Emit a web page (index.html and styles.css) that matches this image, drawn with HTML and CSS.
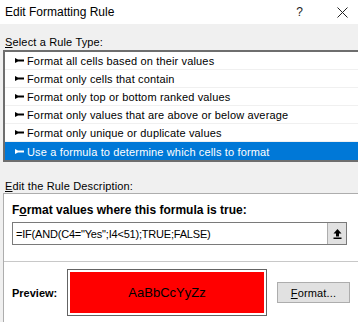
FILE: index.html
```html
<!DOCTYPE html>
<html lang="en">
<head>
  <meta charset="UTF-8" />
  <title>Edit Formatting Rule</title>
  <link rel="stylesheet" href="styles.css">
</head>
<body>
  <div class="titlebar">
    <span class="title">Edit Formatting Rule</span>
    <span class="help">?</span>
    <svg class="close" width="11" height="11" viewBox="0 0 11 11"><path d="M0.5 0.5 L10.5 10.5 M10.5 0.5 L0.5 10.5" stroke="#222" stroke-width="1"/></svg>
  </div>

  <div class="dialog">
    <div class="label"><u>S</u>elect a Rule Type:</div>
    <ul class="rule-list">
      <li><svg class="pin" viewBox="0 0 9 6"><path d="M0 0 L3 1.5 H9 V3.5 H3 L0 5 Z"/></svg>Format all cells based on their values</li>
      <li><svg class="pin" viewBox="0 0 9 6"><path d="M0 0 L3 1.5 H9 V3.5 H3 L0 5 Z"/></svg>Format only cells that contain</li>
      <li><svg class="pin" viewBox="0 0 9 6"><path d="M0 0 L3 1.5 H9 V3.5 H3 L0 5 Z"/></svg>Format only top or bottom ranked values</li>
      <li><svg class="pin" viewBox="0 0 9 6"><path d="M0 0 L3 1.5 H9 V3.5 H3 L0 5 Z"/></svg>Format only values that are above or below average</li>
      <li><svg class="pin" viewBox="0 0 9 6"><path d="M0 0 L3 1.5 H9 V3.5 H3 L0 5 Z"/></svg>Format only unique or duplicate values</li>
      <li class="selected"><svg class="pin" viewBox="0 0 9 6"><path d="M0 0 L3 1.5 H9 V3.5 H3 L0 5 Z"/></svg>Use a formula to determine which cells to format</li>
    </ul>

    <div class="label desc-label"><u>E</u>dit the Rule Description:</div>
    <div class="desc-box">
      <div class="formula-title">F<u>o</u>rmat values where this formula is true:</div>
      <div class="formula-input">
        <span class="formula-text">=IF(AND(C4="Yes";I4&lt;51);TRUE;FALSE)</span>
        <span class="collapse-btn">
          <svg width="9" height="10" viewBox="0 0 9 10"><path d="M4.5 0 L8.5 4.5 H6 V7.5 H3 V4.5 H0.5 Z M0.5 8.5 H8.5 V10 H0.5 Z" fill="#000"/></svg>
        </span>
      </div>
      <div class="separator"></div>
      <div class="preview-row">
        <span class="preview-label">Preview:</span>
        <div class="preview-frame"><div class="preview-fill">AaBbCcYyZz</div></div>
        <button class="format-btn"><u>F</u>ormat...</button>
      </div>
    </div>
  </div>
</body>
</html>
```

FILE: styles.css
```css
body {
  margin: 0;
  width: 358px;
  height: 322px;
  overflow: hidden;
  background: #f0f0f0;
  font-family: 'Liberation Sans', Arial, sans-serif;
  font-size: 11px;
  letter-spacing: 0.15px;
  color: #000;
}
.titlebar {
  height: 24px;
  background: white;
  display: flex;
  align-items: center;
  padding-left: 5px;
  letter-spacing: 0;
}
.title {
  font-size: 12px;
  flex: 1;
}
.help {
  font-size: 12px;
  margin-right: 34px;
  color: #222;
}
.close {
  margin-right: 10px;
}
.dialog {
  padding-left: 3px;
  width: 355px;
  overflow: hidden;
}
.label {
  height: 26px;
  line-height: 14px;
  padding-left: 2px;
  padding-top: 11px;
  box-sizing: border-box;
}
.rule-list {
  list-style: none;
  margin: 0;
  padding: 0;
  width: 380px;
  background: white;
  border: 2px solid #6e6e6e;
  border-right: none;
}
.rule-list li {
  height: 18px;
  line-height: 16px;
  padding-top: 1px;
  display: flex;
  align-items: center;
  border-bottom: 1px solid #f0f0f0;
  box-sizing: border-box;
}
.rule-list li.selected {
  background: #0078d7;
  color: white;
  border-bottom: none;
}
.pin {
  width: 9px;
  height: 6px;
  margin: 0 3px 0 10px;
  fill: #000;
}
.selected .pin {
  fill: white;
}
.desc-label {
  height: 31px;
  padding-top: 17px;
}
.desc-box {
  width: 380px;
  height: 140px;
  background: white;
  border: 1px solid #adadad;
  border-right: none;
  padding-left: 8px;
  box-sizing: border-box;
}
.formula-title {
  font-weight: bold;
  font-size: 12px;
  letter-spacing: 0;
  padding-top: 9px;
  height: 28px;
  box-sizing: border-box;
  line-height: 14px;
}
.formula-input {
  width: 335px;
  height: 23px;
  border: 1px solid #7a7a7a;
  box-sizing: border-box;
  display: flex;
  align-items: center;
}
.formula-text {
  flex: 1;
  padding-left: 3px;
  letter-spacing: -0.2px;
}
.collapse-btn {
  width: 18px;
  height: 21px;
  background: #e1e1e1;
  border-left: 1px solid #adadad;
  display: flex;
  align-items: center;
  justify-content: center;
}
.separator {
  height: 1px;
  background: #c8c8c8;
  margin: 16px 0 0 -8px;
}
.preview-row {
  display: flex;
  align-items: center;
  margin-top: 7px;
}
.preview-label {
  font-weight: bold;
  width: 55px;
  letter-spacing: 0;
}
.preview-frame {
  width: 200px;
  height: 47px;
  border: 1px solid #646464;
  padding: 2px;
  box-sizing: border-box;
}
.preview-fill {
  height: 100%;
  background: #ff0000;
  display: flex;
  align-items: center;
  justify-content: center;
  font-size: 13px;
  letter-spacing: 0;
}
.format-btn {
  margin-left: 10px;
  width: 73px;
  height: 21px;
  background: #e1e1e1;
  border: 1px solid #adadad;
  font-family: 'Liberation Sans', Arial, sans-serif;
  font-size: 11px;
  letter-spacing: 0.15px;
  padding: 0;
}
```
